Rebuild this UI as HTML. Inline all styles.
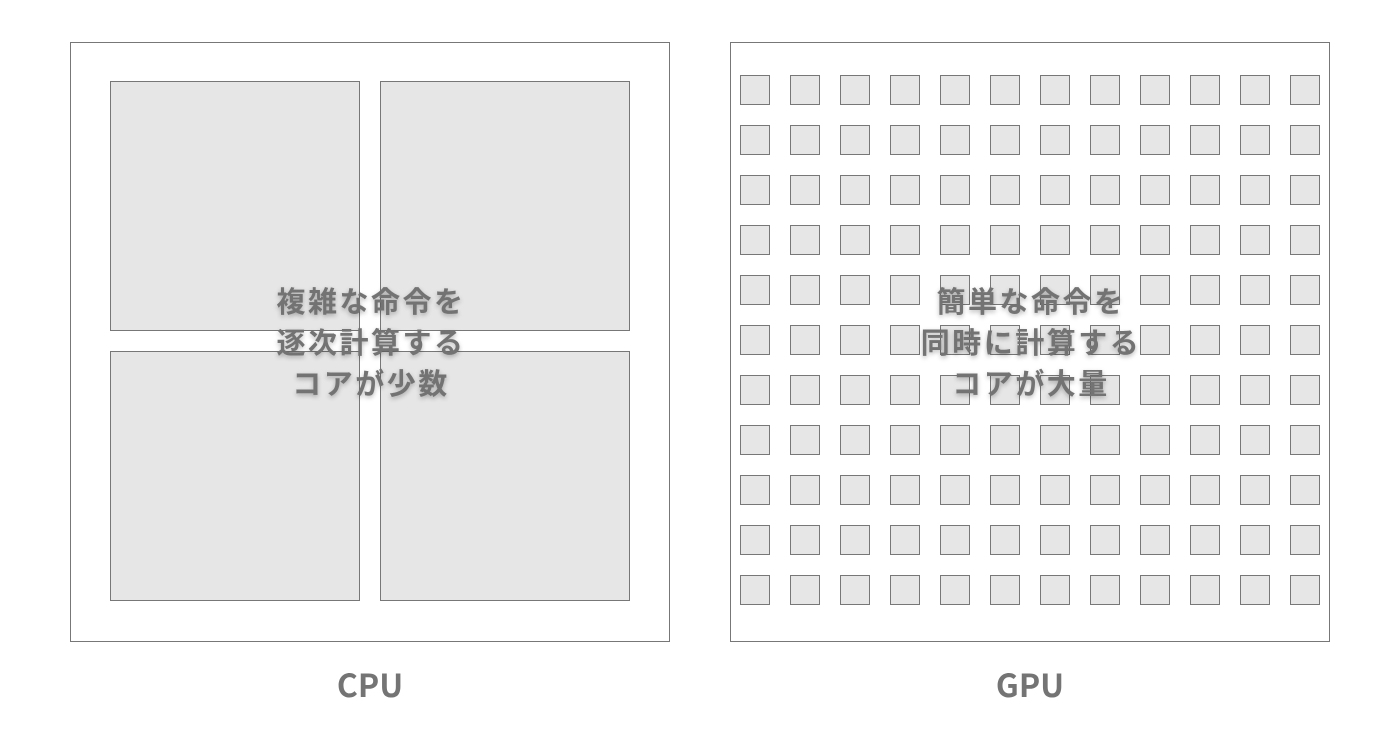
<!DOCTYPE html>
<html><head><meta charset="utf-8"><style>
html,body{margin:0;padding:0;background:#fff;width:1400px;height:732px;overflow:hidden}
.t{position:absolute;font-family:"Noto Sans CJK JP",sans-serif;font-weight:bold;color:#737373;text-align:center;font-size:29px;line-height:41px;text-shadow:0 2px 5px rgba(0,0,0,0.28);letter-spacing:2.5px}
.l{position:absolute;font-family:"Noto Sans CJK JP",sans-serif;font-weight:bold;color:#747474;font-size:32px;line-height:40px;text-align:center;width:200px}
</style></head><body>
<svg width="1400" height="732" style="position:absolute;left:0;top:0">
<defs><pattern id="p" x="740" y="75" width="50" height="50" patternUnits="userSpaceOnUse">
<rect x="0.5" y="0.5" width="29" height="29" fill="#e6e6e6" stroke="#777" stroke-width="1"/></pattern></defs>
<rect x="70.5" y="42.5" width="599" height="599" fill="#fff" stroke="#777"/>
<rect x="110.5" y="81.5" width="249" height="249" fill="#e6e6e6" stroke="#777"/>
<rect x="380.5" y="81.5" width="249" height="249" fill="#e6e6e6" stroke="#777"/>
<rect x="110.5" y="351.5" width="249" height="249" fill="#e6e6e6" stroke="#777"/>
<rect x="380.5" y="351.5" width="249" height="249" fill="#e6e6e6" stroke="#777"/>
<rect x="730.5" y="42.5" width="599" height="599" fill="#fff" stroke="#777"/>
<rect x="740" y="75" width="580" height="530" fill="url(#p)"/>
</svg>
<div class="t" style="left:220px;top:280px;width:302px">複雑な命令を<br>逐次計算する<br>コアが少数</div>
<div class="t" style="left:880px;top:280px;width:302px">簡単な命令を<br>同時に計算する<br>コアが大量</div>
<div class="l" style="left:270px;top:664px">CPU</div>
<div class="l" style="left:930px;top:664px">GPU</div>
</body></html>
